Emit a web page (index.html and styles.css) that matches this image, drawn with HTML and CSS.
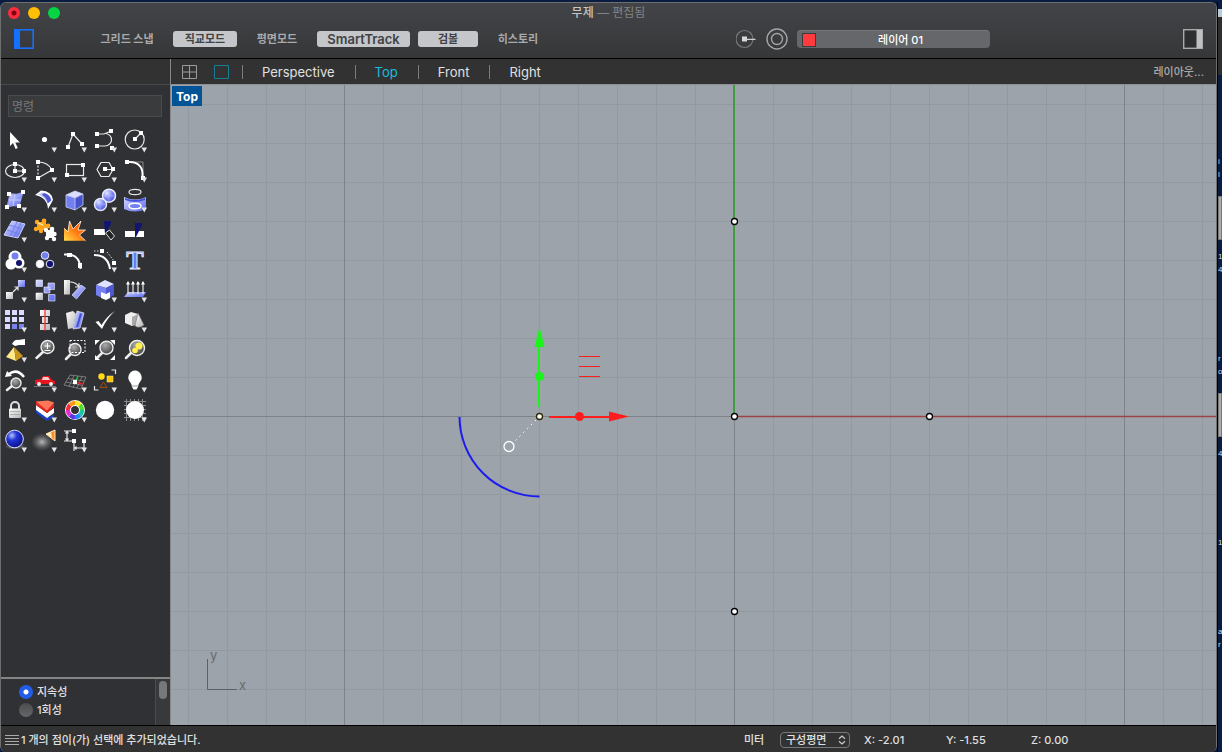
FILE: index.html
```html
<!DOCTYPE html>
<html lang="ko">
<head>
  <meta charset="UTF-8" />
  <meta name="viewport" content="width=device-width, initial-scale=1.0"/>
  <title>무제</title>
  <link rel="stylesheet" href="styles.css">
</head>
<body>

  <svg class="defs" aria-hidden="true">
    <defs>
      <linearGradient id="blue" x1="0" y1="0" x2="1" y2="1"><stop offset="0" stop-color="#d8dcff"/><stop offset="1" stop-color="#5967ee"/></linearGradient>
      <linearGradient id="gray" x1="0" y1="0" x2="1" y2="1"><stop offset="0" stop-color="#fff"/><stop offset="1" stop-color="#b5b5b5"/></linearGradient>
      <linearGradient id="fire" x1="1" y1="0" x2="0" y2="1"><stop offset="0" stop-color="#ff4a00"/><stop offset=".5" stop-color="#ff7a10"/><stop offset="1" stop-color="#ffe04a"/></linearGradient>
      <radialGradient id="ball" cx=".35" cy=".3" r=".8"><stop offset="0" stop-color="#e8ebff"/><stop offset=".5" stop-color="#7c88f2"/><stop offset="1" stop-color="#4450d0"/></radialGradient>
      <radialGradient id="navy" cx=".35" cy=".3" r=".8"><stop offset="0" stop-color="#b6c2ff"/><stop offset=".35" stop-color="#2436d8"/><stop offset="1" stop-color="#050a78"/></radialGradient>
      <radialGradient id="glass" cx=".4" cy=".3" r=".8"><stop offset="0" stop-color="#aaa"/><stop offset="1" stop-color="#3b3b3d"/></radialGradient>
      <radialGradient id="haze"><stop offset="0" stop-color="#ddd" stop-opacity=".8"/><stop offset="1" stop-color="#888" stop-opacity="0"/></radialGradient>
      <path id="more" d="M21.500 22.500h5.500l-2.700 5z" fill="#e4e4e4"/>
    </defs>
  </svg>

  <div class="window">
    <header class="titlebar">
      <div class="title-row">
        <div class="lights">
          <button class="light close" aria-label="닫기"></button>
          <button class="light mini" aria-label="최소화"></button>
          <button class="light full" aria-label="확대"></button>
        </div>
        <h1 class="title">무제 <span>— 편집됨</span></h1>
      </div>
      <div class="tool-row">
        <button class="panel-btn" aria-label="왼쪽 패널">
          <svg width="20" height="20" viewBox="0 0 20 20"><rect x=".8" y=".8" width="18.4" height="18.4" fill="none" stroke="#1470ff" stroke-width="1.6"/><rect width="6" height="20" fill="#1470ff"/></svg>
        </button>
        <div class="modes">
          <button class="mode">그리드 스냅</button>
          <button class="mode on">직교모드</button>
          <button class="mode">평면모드</button>
          <button class="mode on">SmartTrack</button>
          <button class="mode on">검볼</button>
          <button class="mode">히스토리</button>
        </div>
        <div class="layer-group">
          <button class="panel-btn" aria-label="기록">
            <svg width="21" height="20" viewBox="0 0 21 20"><circle cx="8.500" cy="10" r="8.500" fill="none" stroke="#77787a" stroke-width="1.200"/><rect x="6" y="7.500" width="5" height="5" fill="#d8d8da"/><path d="M9 10.300h10.500" stroke="#d0d0d2" stroke-width="1.300"/></svg>
          </button>
          <button class="panel-btn" aria-label="대상">
            <svg width="22" height="22" viewBox="0 0 22 22" fill="none" stroke="#a4a5a8" stroke-width="1.400"><circle cx="11" cy="11" r="10"/><circle cx="11" cy="11" r="5.500"/></svg>
          </button>
          <button class="layer"><span class="swatch"></span>레이어 01</button>
        </div>
        <button class="panel-btn" aria-label="오른쪽 패널">
          <svg width="20" height="20" viewBox="0 0 20 20"><rect x=".7" y=".7" width="18.600" height="18.600" fill="#2e2f31" stroke="#a9aaac" stroke-width="1.400"/><rect x="13.500" y="1" width="5.500" height="18" fill="#bfbfc4"/></svg>
        </button>
      </div>
    </header>

    <main class="main">
      <aside class="sidebar">
        <div class="sidebar-top"></div>
        <input class="command" type="text" placeholder="명령" aria-label="명령">
        <div class="tools">
          <button aria-label="선택"><svg viewBox="0 0 30 30"><path d="M10 7v14l3-3 2.600 6 2.200-1-2.500-5.500h4.500z" fill="#fff"/></svg></button>
          <button aria-label="점"><svg viewBox="0 0 30 30"><circle cx="14.500" cy="14.500" r="2.600" fill="#fff"/><use href="#more"/></svg></button>
          <button aria-label="폴리라인"><svg viewBox="0 0 30 30"><path d="M8 22l5-13 9 10" class="line"/><path d="M6 20h4v4H6zM11 7h4v4h-4zM20 17h4v4h-4z" fill="#fff"/><use href="#more"/></svg></button>
          <button aria-label="곡선"><svg viewBox="0 0 30 30"><path d="M7 9h7l7-3M16 8.500c4 1 5.500 4 5.500 6.500s-2.500 6-6.500 6H7" class="line"/><path d="M5 7h4v4H5zM19 4h4v4h-4zM5 19h4v4H5zM20 21h4v4h-4z" fill="#fff"/><use href="#more"/></svg></button>
          <button aria-label="원"><svg viewBox="0 0 30 30"><circle cx="14.700" cy="14.500" r="9.500" class="line"/><path d="M15 14l6-6" class="line"/><path d="M13 12h4v4h-4zM19 6h4v4h-4z" fill="#fff"/><use href="#more"/></svg></button>

          <button aria-label="타원"><svg viewBox="0 0 30 30"><ellipse cx="15" cy="16" rx="9.500" ry="6.500" class="line"/><path d="M15 9v7h9" class="line"/><path d="M13 7h4v4h-4zM13 14h4v4h-4zM22 14h4v4h-4z" fill="#fff"/><use href="#more"/></svg></button>
          <button aria-label="호"><svg viewBox="0 0 30 30"><path d="M8 7q10 0 14 8L8 23" class="line"/><path d="M8 7v16" class="line" stroke-dasharray="2 1.500"/><path d="M6 5h4v4H6zM20 13h4v4h-4zM6 21h4v4H6z" fill="#fff"/><use href="#more"/></svg></button>
          <button aria-label="직사각형"><svg viewBox="0 0 30 30"><rect x="6.500" y="9.500" width="17" height="11" class="line"/><path d="M5 18h4v4H5zM21 8h4v4h-4z" fill="#fff"/><use href="#more"/></svg></button>
          <button aria-label="다각형"><svg viewBox="0 0 30 30"><path d="M7 14.500l4-7h8l4 7-4 7h-8zM15 14.500h8" class="line"/><path d="M13 12h4v4h-4zM21 12h4v4h-4z" fill="#fff"/><use href="#more"/></svg></button>
          <button aria-label="필릿"><svg viewBox="0 0 30 30"><path d="M8 7h15v14" fill="none" stroke="#888"/><path d="M7 7h3c8 0 12.500 5 12.500 12v4" fill="none" stroke="#fff" stroke-width="2"/><path d="M5 5h4v4H5zM21 21h4v4h-4z" fill="#fff"/><use href="#more"/></svg></button>

          <button aria-label="서피스"><svg viewBox="0 0 30 30"><path d="M10 8.500q6 2 13-1L19 21q-5-1-12 1z" fill="url(#blue)" stroke="#8d96f5"/><path d="M15 9l-2 12M9 15h12" stroke="#c9ceff" fill="none"/><path d="M7 7h4v4H7zM21 5h4v4h-4zM5 20h4v4H5zM17 19h4v4h-4z" fill="#fff"/><use href="#more"/></svg></button>
          <button aria-label="스윕"><svg viewBox="0 0 30 30"><path d="M5 10l6-4.500Q22 6 23 15l-5 9Q17 12 5 10z" fill="#fff"/><path d="M12 7.500Q20 8 21.500 15.500l-4 3Q16 12 8 9.500z" fill="url(#blue)"/><path d="M14 8q6 2 7 7l-3 3q-1-6-6-8z" fill="#4c57cf"/><use href="#more"/></svg></button>
          <button aria-label="상자"><svg viewBox="0 0 30 30"><path d="M6 10l9-4 8 3-8 4z" fill="#dadefe"/><path d="M6 10l9 3v12l-9-3z" fill="#727ff0"/><path d="M15 13l8-4v11l-8 5z" fill="#4653c9"/><path d="M6 10l9-4 8 3v11l-8 5-9-3zM15 13v12M6 10l9 3 8-4" fill="none" stroke="#d8dcff" stroke-width=".7"/><use href="#more"/></svg></button>
          <button aria-label="부울"><svg viewBox="0 0 30 30"><g fill="url(#ball)" stroke="#e9ebff" stroke-width="1.500"><circle cx="19" cy="10.700" r="6.500"/><circle cx="10.500" cy="19.500" r="6"/></g><path d="M13 11h12M19 5v12M5 19h11M10 14v12" stroke="#aab2ff" stroke-width=".7"/><use href="#more"/></svg></button>
          <button aria-label="돌출"><svg viewBox="0 0 30 30"><ellipse cx="15" cy="7" rx="6" ry="2.600" class="line"/><path d="M4 12q11 5 22 0v12q-11 5-22 0z" fill="url(#blue)"/><path d="M5 13q10 4 20 0v2q-10 4-20 0z" fill="#4653d9"/><ellipse cx="15" cy="21" rx="6" ry="2.800" fill="#7480ef" stroke="#fff" stroke-width="1.500"/><use href="#more"/></svg></button>

          <button aria-label="서피스 편집"><svg viewBox="0 0 30 30"><path d="M12 6l13 3-7 14-14-3z" fill="url(#blue)" stroke="#cdd2ff"/><path d="M9 10l13 4M7 15l13 4M17 7l-7 14M21 8l-7 14" stroke="#737fec" fill="none"/><use href="#more"/></svg></button>
          <button aria-label="결합"><svg viewBox="0 0 30 30"><g fill="#ffa51c"><path d="M7 7h9v8H7z"/><circle cx="7" cy="7" r="2.200"/><circle cx="14" cy="6" r="2.400"/><circle cx="6" cy="14" r="2.200"/><circle cx="18" cy="11" r="2.400"/><circle cx="11" cy="16" r="2.200"/></g><path d="M8 8l5 2" stroke="#ffe0a0" stroke-width="1.500"/><g fill="#fff"><path d="M16 15h8v8h-8z"/><circle cx="16" cy="15" r="2.200"/><circle cx="22" cy="14" r="2.300"/><circle cx="24.500" cy="19" r="2.200"/><circle cx="17" cy="23" r="2.200"/><circle cx="24" cy="24" r="2.200"/></g></svg></button>
          <button aria-label="분해"><svg viewBox="0 0 30 30"><path d="M4 25.700V13l4 3L9.500 6l3.500 8 8-8-3 9 7.500 0-6 5 6 5.700z" fill="url(#fire)"/><path d="M4 13l4 4 1.500-11L13 14l8-8-3 9 7.500 0-6 5 6 5.700" fill="none" stroke="#fff2df" stroke-width=".8"/></svg></button>
          <button aria-label="트림"><svg viewBox="0 0 30 30"><path d="M4 14h11v6H4z" fill="#fff"/><path d="M14 6h7v3l-6 10z" fill="#111470"/><path d="M15.500 18l4-3 5 6-3.500 4z" fill="#222" stroke="#ddd"/></svg></button>
          <button aria-label="분할"><svg viewBox="0 0 30 30"><path d="M5 16h19v6H5z" fill="#fff"/><path d="M15 8h7v2l-6 12h-1z" fill="#111470"/></svg></button>

          <button aria-label="그룹"><svg viewBox="0 0 30 30"><g fill="#fff"><circle cx="15" cy="12" r="6.500"/><circle cx="11" cy="19" r="5.500"/><circle cx="19" cy="18" r="5.500"/></g><circle cx="15" cy="11" r="3.500" fill="#7480f0"/><circle cx="19" cy="18" r="3" fill="#111470"/><use href="#more"/></svg></button>
          <button aria-label="그룹 해제"><svg viewBox="0 0 30 30"><g stroke="#e8eaff"><circle cx="15" cy="10.500" r="3.800" fill="#7480f0"/><circle cx="10" cy="19" r="3.800" fill="#fff"/><circle cx="20" cy="19" r="3.800" fill="#111470"/></g></svg></button>
          <button aria-label="곡선 편집"><svg viewBox="0 0 30 30"><path d="M4 9.500h4Q20 10 20.500 24" fill="none" stroke="#fff" stroke-width="2"/><path d="M7 8h5v4H7zM18 18h4v5h-4z" fill="#fff"/></svg></button>
          <button aria-label="점 편집"><svg viewBox="0 0 30 30"><path d="M4 10q14 0 16 14" fill="none" stroke="#fff" stroke-width="2"/><path d="M4 6h8M17 7l7 9" stroke="#ddd" stroke-dasharray="1.500 1.500"/><path d="M10 4h4v4h-4zM22 16h4v4h-4z" fill="#fff"/><use href="#more"/></svg></button>
          <button aria-label="문자"><svg viewBox="0 0 30 30"><text x="15" y="24" class="glyph">T</text></svg></button>

          <button aria-label="이동"><svg viewBox="0 0 30 30"><path d="M18 5h7v7h-7z" fill="url(#blue)"/><path d="M6 17h7v7H6z" fill="url(#gray)"/><path d="M13 17l5-5m-3.500 0H18v3.500" class="line"/><use href="#more"/></svg></button>
          <button aria-label="복사"><svg viewBox="0 0 30 30"><g fill="url(#blue)" stroke="#eceeff" stroke-width=".6"><path d="M6 5h6.500v6.500H6zM18 8h6.500v6.500H18zM14 12h6v6h-6zM18.500 19.500H25V26h-6.500z"/><path d="M6 18h6.500v6.500H6z" fill="url(#gray)"/></g></svg></button>
          <button aria-label="회전"><svg viewBox="0 0 30 30"><path d="M4 5h6v14.500H4z" fill="url(#gray)"/><path d="M12 20l9-10 4.500 3-9 11z" fill="url(#blue)" stroke="#dde0ff" stroke-width=".7"/><path d="M10 7q6 0 9 5m0-4v4h-4" class="line"/></svg></button>
          <button aria-label="솔리드 편집"><svg viewBox="0 0 30 30"><path d="M6 10l9-5 9 4-8 4z" fill="#dfe2ff"/><path d="M6 10l10 3v12L6 20z" fill="#7581f0"/><path d="M16 13l8-4v11l-8 5z" fill="#4c59cf"/><path d="M11 17l5 2 4-2v6l-4 2-5-2z" fill="#fff"/><use href="#more"/></svg></button>
          <button aria-label="방향"><svg viewBox="0 0 30 30"><path d="M8 17h18l-3 5H4z" fill="url(#blue)"/><path d="M8 19V7M13 19V7M18 19V7M23 19V7" class="line"/><path d="M6 9.500L8 6l2 3.500zM11 9.500L13 6l2 3.500zM16 9.500L18 6l2 3.500zM21 9.500L23 6l2 3.500z" fill="#fff"/><use href="#more"/></svg></button>

          <button aria-label="배열"><svg viewBox="0 0 30 30"><path d="M5 5h5v5H5zM12 5h5v5h-5zM19 5h5v5h-5zM5 12h5v5H5zM12 12h5v5h-5zM19 12h5v5h-5zM5 19h5v5H5z" fill="#d9dcff"/><path d="M12 19h5v5h-5zM19 19h5v5h-5z" fill="#7883f0"/><use href="#more"/></svg></button>
          <button aria-label="정렬"><svg viewBox="0 0 30 30"><path d="M10 5h10v6H10zM12 12h6v6h-6zM10 19h10v6H10z" fill="url(#gray)"/><path d="M15 4v22" stroke="#f22" stroke-width="1.200"/><use href="#more"/></svg></button>
          <button aria-label="변형"><svg viewBox="0 0 30 30"><path d="M6 8l7-2 3 3-3 14-5 1z" fill="url(#gray)"/><path d="M17 6l7 2-4 15-7 1z" fill="url(#blue)" stroke="#e4e6ff" stroke-width=".7"/><path d="M20 8l2 1-4 13-2 0z" fill="#4652cb"/><use href="#more"/></svg></button>
          <button aria-label="확인"><svg viewBox="0 0 30 30"><path d="M5.500 17l3-1 3 4Q17 11 25 6 17 13 12 24z" fill="#fff"/><use href="#more"/></svg></button>
          <button aria-label="메쉬"><svg viewBox="0 0 30 30"><path d="M5 10l6-3 7 2v10l-6 2-7-3z" fill="#eee"/><path d="M12 12l6-3v10l-6 2z" fill="#aaa"/><path d="M18 8l6 12q-5 4-9 1z" fill="url(#gray)" stroke="#666" stroke-width=".5"/><use href="#more"/></svg></button>

          <button aria-label="회전 보기"><svg viewBox="0 0 30 30"><path d="M14 12l-8 10 10 4z" fill="#ffe98a"/><path d="M14 12l2 14 7-5z" fill="#c8961e"/><path d="M12 9q3-5 6-4l7-1v6h-6l-4 1z" fill="#fff"/><use href="#more"/></svg></button>
          <button aria-label="확대/축소"><svg viewBox="0 0 30 30"><path d="M13 17l-6.500 6" class="handle"/><circle cx="17.500" cy="12" r="6.500" class="lens"/><path d="M14.500 11h6M17.500 8v6M14.500 15.500h6" stroke="#fff"/></svg></button>
          <button aria-label="창 확대"><svg viewBox="0 0 30 30"><path d="M11 19l-5 5" class="handle"/><circle cx="15" cy="14.500" r="6" class="lens"/><path d="M10 5.500h15v12H10z" fill="none" stroke="#fff" stroke-dasharray="2 1.500"/></svg></button>
          <button aria-label="모두 보기"><svg viewBox="0 0 30 30"><path d="M12 18l-5 5" class="handle"/><circle cx="16.500" cy="12.700" r="6.500" class="lens"/><path d="M5 5h5l-5 5zM25 5v5l-5-5zM5 25v-5l5 5zM25 25h-5l5-5z" fill="#fff"/></svg></button>
          <button aria-label="선택 확대"><svg viewBox="0 0 30 30"><path d="M11 18l-5 5" class="handle"/><circle cx="17" cy="13" r="7.500" class="lens"/><circle cx="19" cy="11" r="3.500" fill="#fff04a"/><circle cx="15" cy="15.500" r="2.800" fill="#fff04a"/></svg></button>

          <button aria-label="보기 취소"><svg viewBox="0 0 30 30"><path d="M12 21l-5 4" class="handle"/><circle cx="16" cy="18" r="5" class="lens"/><path d="M24 12Q17 3 9 9" fill="none" stroke="#fff" stroke-width="2.500"/><path d="M5 12l2-6 5 5z" fill="#fff"/><use href="#more"/></svg></button>
          <button aria-label="보기"><svg viewBox="0 0 30 30"><path d="M5 15l6-1 2-3h6l3 4 3 1v3H5z" fill="#e51620"/><path d="M13 12h5l2 3h-8z" fill="#ffc9c9"/><circle cx="9" cy="19" r="2" fill="#eee"/><circle cx="21" cy="19" r="2" fill="#eee"/><path d="M4 21.500h22" stroke="#777"/><use href="#more"/></svg></button>
          <button aria-label="구성평면"><svg viewBox="0 0 30 30"><path d="M10 10l16 2-5 12-17-4zM8 13.500l16 2.500M6 17l17 3.500M14 10.500l-5 11M18 11l-5 11.500M22 11.500l-5 11.500" fill="none" stroke="#8b8b8b" stroke-width=".8"/><path d="M16 16l2-5" stroke="#1bbd34" stroke-width="1.500"/><path d="M15 17l8 2" stroke="#ed1c24" stroke-width="1.500"/><path d="M13 15h4v4h-4z" fill="#fff"/><use href="#more"/></svg></button>
          <button aria-label="개체 선택"><svg viewBox="0 0 30 30"><circle cx="11.500" cy="11.500" r="3.200" fill="#ffdc17"/><path d="M17 11h6v6h-6z" fill="#ffc400" stroke="#fff0a0" stroke-width=".5"/><path d="M10 22.500l3.500-5.500 3.500 5.500z" fill="none" stroke="#a24c10"/><path d="M21.500 5h4v4M4.500 21v4h4" class="line"/><use href="#more"/></svg></button>
          <button aria-label="조명"><svg viewBox="0 0 30 30"><path d="M15 5.500a7 7 0 0 1 5 11.500q-2 2-2 5l-1.500 2.500h-3L12 22q0-3-2-5a7 7 0 0 1 5-11.500z" fill="#fff"/><path d="M12 21h6" stroke="#999"/><use href="#more"/></svg></button>

          <button aria-label="잠금"><svg viewBox="0 0 30 30"><path d="M11 14v-3a4 4 0 0 1 8 0v3" fill="none" stroke="#ddd" stroke-width="2"/><rect x="9" y="13.500" width="12" height="9.500" rx="1" fill="url(#gray)"/><path d="M10 16.500h10M10 19.500h10" stroke="#999" stroke-width=".7"/><use href="#more"/></svg></button>
          <button aria-label="레이어"><svg viewBox="0 0 30 30"><path d="M6 14l11 9 7-4v3l-7 4-11-8z" fill="#1d3fc4"/><path d="M6 10l11 8 7-5v5l-7 5-11-8z" fill="#fff"/><path d="M6 6.500l11 3.500 7-3v5l-7 6-11-8z" fill="#e3261f"/><path d="M6 6.500l12-1 6 2-7 8z" fill="#ff7758"/><use href="#more"/></svg></button>
          <button aria-label="색상"><svg viewBox="0 0 30 30"><circle cx="15" cy="15" r="10" fill="#fff"/><g fill="none" stroke-width="4.500" stroke-dasharray="1 7"><circle cx="15" cy="15" r="7" pathLength="8" stroke="#16c9a5"/><circle cx="15" cy="15" r="7" pathLength="8" stroke="#1c8cf5" transform="rotate(45 15 15)"/><circle cx="15" cy="15" r="7" pathLength="8" stroke="#5c35ee" transform="rotate(90 15 15)"/><circle cx="15" cy="15" r="7" pathLength="8" stroke="#e62bd1" transform="rotate(135 15 15)"/><circle cx="15" cy="15" r="7" pathLength="8" stroke="#f72a3c" transform="rotate(180 15 15)"/><circle cx="15" cy="15" r="7" pathLength="8" stroke="#ff9a17" transform="rotate(225 15 15)"/><circle cx="15" cy="15" r="7" pathLength="8" stroke="#ffe81c" transform="rotate(270 15 15)"/><circle cx="15" cy="15" r="7" pathLength="8" stroke="#4ae02b" transform="rotate(315 15 15)"/></g><circle cx="15" cy="15" r="4.500" fill="#303134" stroke="#fff"/><use href="#more"/></svg></button>
          <button aria-label="음영"><svg viewBox="0 0 30 30"><circle cx="15" cy="15" r="9.200" fill="#fff"/></svg></button>
          <button aria-label="와이어프레임"><svg viewBox="0 0 30 30"><path d="M6.500 4v22M10.500 4v22M14.500 4v22M18.500 4v22M22.500 4v22M4 6.500h22M4 10.500h22M4 14.500h22M4 18.500h22M4 22.500h22" stroke="#8c8c8c"/><circle cx="15" cy="15" r="9" fill="#fff"/><use href="#more"/></svg></button>

          <button aria-label="렌더링"><svg viewBox="0 0 30 30"><ellipse cx="15" cy="21" rx="11" ry="4" fill="url(#haze)"/><circle cx="14.500" cy="14" r="8.800" fill="url(#navy)" stroke="#dfe4ff"/><use href="#more"/></svg></button>
          <button aria-label="스포트라이트"><svg viewBox="0 0 30 30"><ellipse cx="12" cy="17" rx="11" ry="9" fill="url(#haze)"/><path d="M16 9l9-4v11z" fill="#ff8d26" stroke="#ffe4c0"/><path d="M16 9l5-2 1 6z" fill="#fff0c0"/><use href="#more"/></svg></button>
          <button aria-label="치수"><svg viewBox="0 0 30 30"><path d="M4 6h10M4 16h10M7 7v8M5.500 8.500L7 6.500l1.500 2M5.500 13.500L7 15.500l1.500-2M14 16v10M24 16v10M15 23h8M16.500 21.500l-1.500 1.500 1.500 1.500" class="line"/><path d="M12 4h4v4h-4zM12 14h4v4h-4zM22 14h4v4h-4z" fill="#fff"/><use href="#more"/></svg></button>
        </div>
        <div class="options">
          <div class="option-list">
            <label><input type="radio" name="snap" checked> 지속성</label>
            <label><input type="radio" name="snap"> 1회성</label>
          </div>
          <div class="scrollbar"><div class="thumb"></div></div>
        </div>
      </aside>

      <section class="viewport">
        <nav class="tabs">
          <button class="view-btn" aria-label="4개 뷰포트"><svg width="15" height="14" viewBox="0 0 15 14"><path d="M.5.500h14v13H.5zM7.500 0v14M0 7h15" fill="none" stroke="#9b9b9b"/></svg></button>
          <button class="view-btn" aria-label="단일 뷰포트"><svg width="15" height="14" viewBox="0 0 15 14"><path d="M.5.500h14v13H.5z" fill="none" stroke="#167f92"/></svg></button>
          <a class="tab" href="#perspective">Perspective</a>
          <a class="tab active" href="#top">Top</a>
          <a class="tab" href="#front">Front</a>
          <a class="tab" href="#right">Right</a>
          <a class="layout-link" href="#layout">레이아웃...</a>
        </nav>
        <div class="canvas">
          <svg class="scene" width="100%" height="100%">
            <defs>
              <pattern id="minor" x="17" y="19" width="39" height="39" patternUnits="userSpaceOnUse"><path d="M.5 0v39M0 .5h39" stroke="#929aa1"/></pattern>
              <pattern id="major" x="173" y="-59" width="390" height="390" patternUnits="userSpaceOnUse"><path d="M.5 0v390M0 .5h390" stroke="#7d8389"/></pattern>
            </defs>
            <rect width="100%" height="100%" fill="url(#minor)"/>
            <rect width="100%" height="100%" fill="url(#major)"/>
            <path d="M563 0v331" stroke="#429a42" stroke-width="2"/>
            <line x1="563" y1="331.500" x2="100%" y2="331.500" stroke="#9d4348" stroke-width="1.500"/>
            <g fill="#fff" stroke="#000" stroke-width="1.300">
              <circle cx="563.500" cy="136.500" r="3"/>
              <circle cx="563.500" cy="331.500" r="3"/>
              <circle cx="758.500" cy="331.500" r="3"/>
              <circle cx="563.500" cy="526.500" r="3"/>
            </g>
            <!-- gumball -->
            <path d="M288.500 332A80 80 0 0 0 368.500 411.500" fill="none" stroke="#1c1cf0" stroke-width="2"/>
            <path d="M368 322V260" stroke="#19f519" stroke-width="2"/>
            <path d="M363.500 262l5-20 5 20z" fill="#19f519"/>
            <circle cx="368.500" cy="291.500" r="4.500" fill="#19f519"/>
            <path d="M378 332h62" stroke="#ff1c1c" stroke-width="2"/>
            <path d="M438 326.500l20 5-20 5z" fill="#ff1c1c"/>
            <circle cx="408.500" cy="331.500" r="4.500" fill="#ff1c1c"/>
            <path d="M408.500 271v21M418.500 271v21M428.500 271v21" stroke="#57d857" stroke-width=".6"/>
            <path d="M408 271.500h21M408 281.500h21M408 291.500h21" stroke="#ff1c1c"/>
            <path d="M365 335l-24 24" stroke="#fff" stroke-dasharray="1.500 4"/>
            <circle cx="338" cy="361.500" r="5" fill="none" stroke="#fff" stroke-width="1.300"/>
            <circle cx="368.500" cy="331.500" r="3" fill="#fff" stroke="#2b2800" stroke-width="1.300"/>
          </svg>
          <span class="view-label">Top</span>
          <svg class="axes" width="44" height="44"><path d="M2.500 10v30.500H32" fill="none" stroke="#5c6166"/><text x="5" y="11">y</text><text x="34" y="41">x</text></svg>
        </div>
      </section>
    </main>

    <footer class="status">
      <svg width="14" height="12" viewBox="0 0 14 12"><path d="M0 1.500h14M0 4.500h14M0 7.500h14M0 10.500h14" stroke="#aaa"/></svg>
      <span class="message">1 개의 점이(가) 선택에 추가되었습니다.</span>
      <div class="coords">
        <label for="plane">미터</label>
        <div class="plane">
          <select id="plane"><option>구성평면</option></select>
          <svg width="8" height="10" viewBox="0 0 8 10"><path d="M1 3.800L4 1l3 2.800M1 6.200L4 9l3-2.800" fill="none" stroke="#ccc" stroke-width="1.200"/></svg>
        </div>
        <span>X: -2.01</span>
        <span>Y: -1.55</span>
        <span>Z: 0.00</span>
      </div>
    </footer>
  </div>

  <div class="desktop-edge" aria-hidden="true">
    <div class="back-window"></div>
    <p>i<br>l</p>
    <div class="thumbnail"></div>
    <p>1<br>4</p>
    <p class="far">r<br>o</p>
    <div class="thumbnail"></div>
    <p>4</p>
    <p class="far">1</p>
    <p class="far">a<br>r</p>
  </div>

</body>
</html>
```
FILE: styles.css
```css
* { box-sizing: border-box; }
body {
  margin: 0;
  padding-top: 2px;
  height: 100vh;
  display: flex;
  overflow: hidden;
  background: #0a1c40;
  color: #e0e0e0;
  font-family: Inter, "Noto Sans CJK KR", sans-serif;
  font-size: 11px;
  line-height: 16px;
}
button {
  border: none;
  padding: 0;
  background: none;
  color: inherit;
  font: inherit;
  cursor: pointer;
}
svg { display: block; }
a { color: inherit; text-decoration: none; }
.defs { position: absolute; width: 0; height: 0; }

.window {
  flex: 1;
  min-width: 0;
  display: flex;
  flex-direction: column;
  border: 1px solid #6d6e70;
  border-bottom: none;
  border-radius: 6px;
  overflow: hidden;
  background: #303134;
}

/* Title bar */
.titlebar {
  height: 56px;
  border-bottom: 1px solid #000;
  background: linear-gradient(#434447, #363739);
}
.title-row {
  display: grid;
  grid-template-columns: 1fr auto 1fr;
  align-items: center;
  height: 20px;
  padding: 0 7px;
}
.lights { display: flex; gap: 8px; }
.light {
  width: 12px;
  height: 12px;
  border-radius: 50%;
}
.close { background: radial-gradient(circle, #7d0010 2px, #ff2c40 3px); }
.mini { background: #ffbf05; }
.full { background: #05d545; }
.title {
  margin: 0;
  font-size: 12px;
  font-weight: 500;
  color: #c5c5c6;
}
.title span { color: #828386; font-weight: 400; }
.tool-row {
  display: flex;
  align-items: center;
  height: 32px;
  padding: 0 13px;
}
.modes {
  display: grid;
  grid-template-columns: 76px 64px 64px 93px 60px 64px;
  gap: 8px;
  margin-left: 55px;
}
.mode {
  height: 16px;
  border-radius: 3px;
  font-size: 11px;
  font-weight: 700;
  color: #a9aaac;
  white-space: nowrap;
}
.mode.on {
  background: #c5c6c9;
  color: #414245;
}
.mode:nth-child(4) { font-size: 13px; font-weight: 600; }
.layer-group {
  display: flex;
  align-items: center;
  gap: 9px;
  margin-left: auto;
  margin-right: 193px;
}
.layer {
  display: flex;
  align-items: center;
  justify-content: center;
  position: relative;
  width: 193px;
  height: 18px;
  border-radius: 4px;
  background: #66676a;
  border-top: 1px solid #77787a;
  color: #fff;
  font-weight: 500;
  padding-left: 14px;
}
.swatch {
  position: absolute;
  left: 5px;
  width: 14px;
  height: 14px;
  background: #ff3b40;
  border: 1px solid #3a3b3d;
}

.main {
  flex: 1;
  min-height: 0;
  display: flex;
}

/* Tool palette */
.sidebar {
  width: 170px;
  flex: none;
  display: flex;
  flex-direction: column;
  border-right: 1px solid #85878a;
}
.sidebar-top {
  height: 26px;
  background: #323232;
  border-bottom: 1px solid #48494b;
}
.command {
  margin: 10px 8px 8px 7px;
  height: 22px;
  padding: 0 3px;
  border: 1px solid #4a4b4d;
  background: #3a3b3d;
  color: #ddd;
  font: inherit;
  font-size: 12px;
}
.command::placeholder { color: #77787a; }
.tools {
  display: grid;
  grid-template-columns: repeat(5, 30px);
  grid-auto-rows: 30px;
  margin-left: -1px;
}
.tools svg { width: 30px; height: 30px; }
.tools .line { fill: none; stroke: #e8e8e8; stroke-width: 1.2; }
.tools .handle { stroke: #eee; stroke-width: 2.5; stroke-linecap: round; }
.tools .lens { fill: url(#glass); stroke: #eee; stroke-width: 1.4; }
.tools .glyph {
  font: bold 26px "Liberation Serif", serif;
  text-anchor: middle;
  fill: #6c7af2;
  stroke: #e5e8ff;
  stroke-width: 1px;
}
.options {
  margin-top: auto;
  height: 48px;
  display: flex;
  border-top: 2px solid #858585;
}
.option-list {
  flex: 1;
  padding: 4px 18px;
}
.option-list label {
  display: flex;
  align-items: center;
  gap: 4px;
  height: 18px;
  font-weight: 500;
}
.option-list input {
  appearance: none;
  width: 14px;
  height: 14px;
  margin: 0;
  border-radius: 50%;
  background: linear-gradient(#4c4d4f, #656668);
}
.option-list input:checked { background: radial-gradient(circle, #fff 2px, #235ce8 3px); }
.scrollbar {
  width: 15px;
  padding: 2px 3px;
  background: #38393b;
  border-left: 1px solid #4b4c4e;
}
.thumb {
  height: 18px;
  border-radius: 4px;
  background: #77787a;
}

/* Viewport */
.viewport {
  flex: 1;
  min-width: 0;
  display: flex;
  flex-direction: column;
}
.tabs {
  display: flex;
  align-items: center;
  height: 26px;
  padding-left: 11px;
  background: #323232;
  border-bottom: 1px solid #8b9095;
  font-size: 13px;
}
.view-btn { margin-right: 17px; }
.view-btn + .view-btn { margin-right: 13px; }
.tab {
  height: 14px;
  line-height: 14px;
  padding: 0 20px 0 19px;
  border-left: 1px solid #7d7d7d;
}
.tab.active { color: #14bfdc; }
.layout-link {
  margin-left: auto;
  padding-right: 12px;
  font-size: 11px;
  font-weight: 500;
  color: #aaa;
}
.canvas {
  flex: 1;
  min-height: 0;
  position: relative;
  background: #9ca3aa;
}
.scene { position: absolute; inset: 0; }
.view-label {
  position: absolute;
  top: 1px;
  left: 1px;
  padding: 3px 4px 1px;
  background: #035397;
  color: #fff;
  font-size: 12px;
  font-weight: 700;
}
.axes {
  position: absolute;
  left: 34px;
  bottom: 32px;
  overflow: visible;
}
.axes text { font-size: 13px; fill: #666b70; }

/* Status bar */
.status {
  display: flex;
  align-items: center;
  height: 27px;
  padding-left: 4px;
  padding-top: 2px;
  border-top: 1px solid #000;
  background: #323232;
  font-weight: 500;
}
.message { margin-left: 2px; }
.coords {
  display: grid;
  grid-template-columns: 36px 84px 82px 85px 185px;
  align-items: center;
  margin-left: auto;
}
.plane {
  position: relative;
  width: 70px;
}
.plane select {
  display: block;
  appearance: none;
  width: 100%;
  height: 16px;
  padding: 0 5px;
  border: 1px solid #77787a;
  border-radius: 4px;
  background: none;
  color: #e0e0e0;
  font: inherit;
  line-height: 14px;
}
.plane svg {
  position: absolute;
  right: 4px;
  top: 3px;
  pointer-events: none;
}

/* Windows behind, at the screen edge */
.desktop-edge {
  width: 5px;
  overflow: hidden;
  border-left: 1px solid #000;
  font-family: "Liberation Sans", sans-serif;
  font-size: 8px;
  line-height: 13px;
  color: #ddd;
}
.desktop-edge p { margin: 0 0 15px; }
.desktop-edge .far { margin-top: 76px; }
.back-window {
  height: 66px;
  margin: 7px 0 80px;
  border-top: 8px solid #b9cbd4;
  background: #2e2e2e;
}
.thumbnail {
  height: 44px;
  margin: 0 0 10px;
  border: 1px solid #777;
  background: #aaa;
}
```
